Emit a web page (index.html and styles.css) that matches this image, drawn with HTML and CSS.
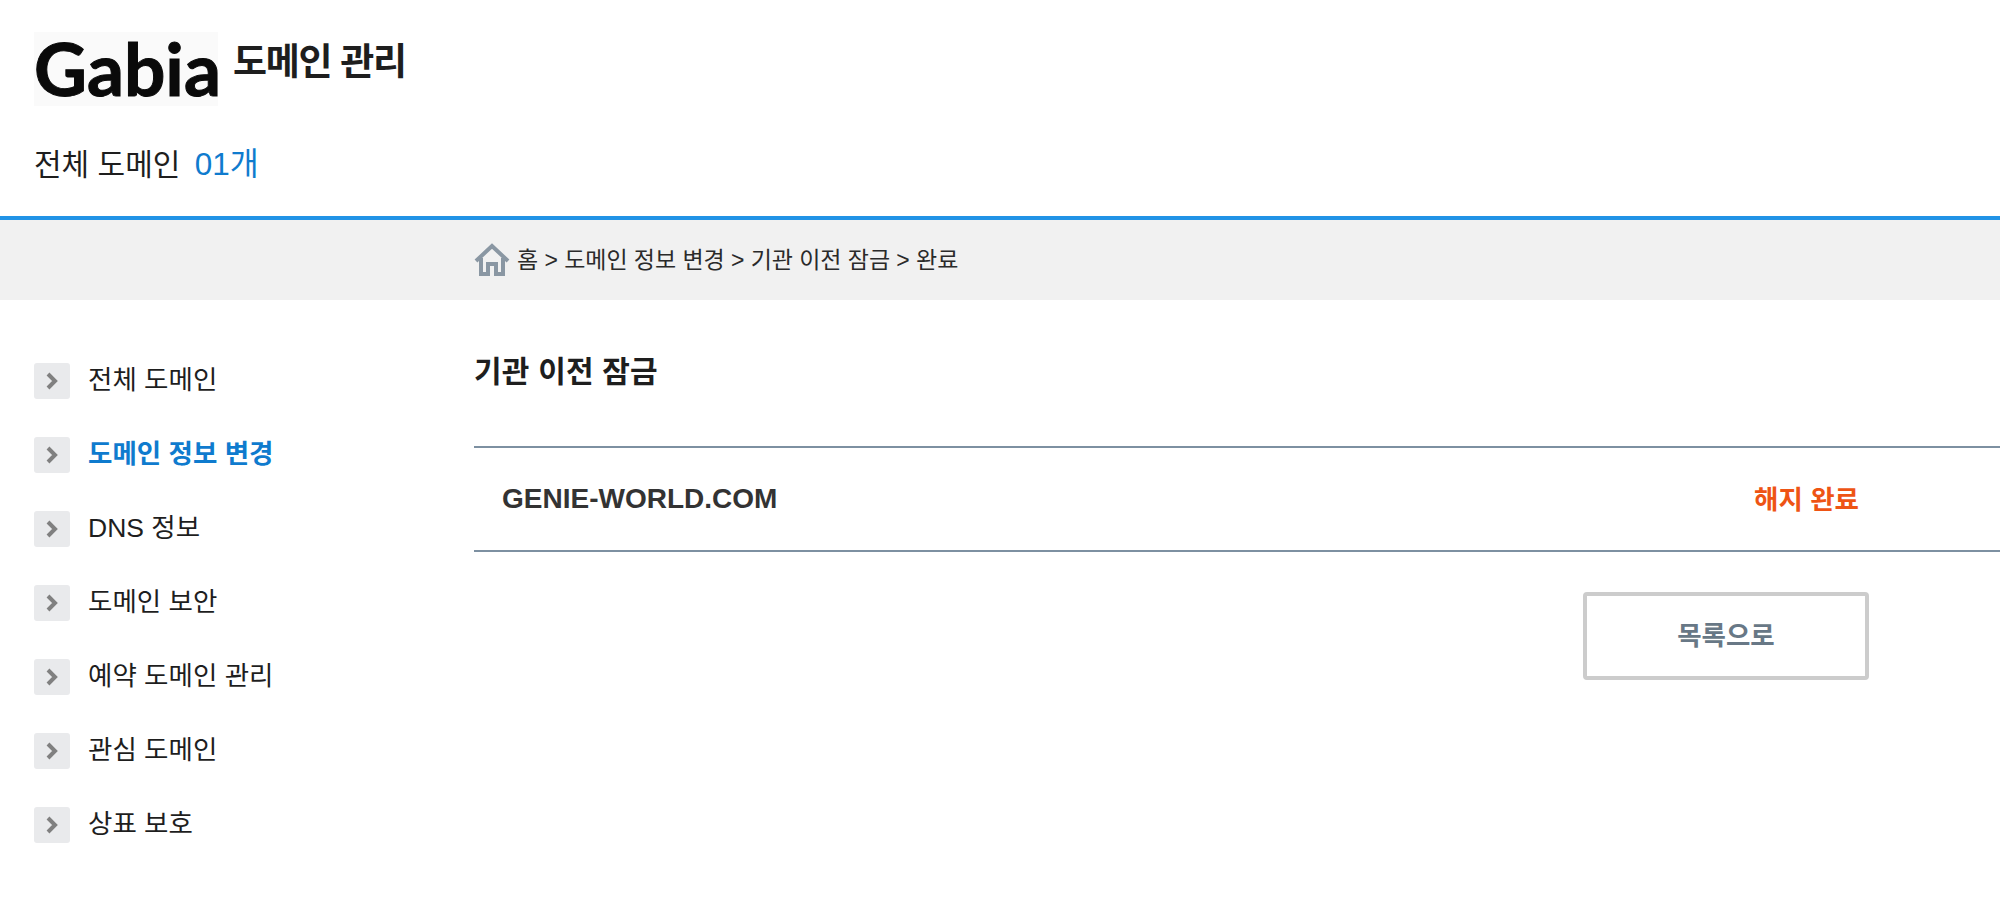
FILE: index.html
```html
<!DOCTYPE html>
<html lang="ko">
<head>
    <meta charset="UTF-8">
    <title>도메인 관리</title>
    <link rel="stylesheet" href="styles.css">
</head>
<body>
    <header class="top-header">
        <div class="brand">
            <div class="logo">Gabia</div>
            <h1>도메인 관리</h1>
        </div>
        <p class="domain-count">전체 도메인 <span class="count">01개</span></p>
    </header>

    <nav class="breadcrumb">
        <svg class="home-icon" viewBox="0 0 36 34" width="36" height="34">
            <path d="M2 18 L18 3 L34 18 M7 15 V31 H14 V21 H22 V31 H29 V15" fill="none" stroke="#8a97a3" stroke-width="4"/>
        </svg>
        <span class="crumbs">홈 &gt; 도메인 정보 변경 &gt; 기관 이전 잠금 &gt; 완료</span>
    </nav>

    <div class="page-body">
        <ul class="side-menu">
            <li><span class="arrow"><svg viewBox="0 0 14 18" width="14" height="18"><path d="M3 2 L10 9 L3 16" fill="none" stroke="#808080" stroke-width="4"/></svg></span>전체 도메인</li>
            <li class="active"><span class="arrow"><svg viewBox="0 0 14 18" width="14" height="18"><path d="M3 2 L10 9 L3 16" fill="none" stroke="#808080" stroke-width="4"/></svg></span>도메인 정보 변경</li>
            <li><span class="arrow"><svg viewBox="0 0 14 18" width="14" height="18"><path d="M3 2 L10 9 L3 16" fill="none" stroke="#808080" stroke-width="4"/></svg></span>DNS 정보</li>
            <li><span class="arrow"><svg viewBox="0 0 14 18" width="14" height="18"><path d="M3 2 L10 9 L3 16" fill="none" stroke="#808080" stroke-width="4"/></svg></span>도메인 보안</li>
            <li><span class="arrow"><svg viewBox="0 0 14 18" width="14" height="18"><path d="M3 2 L10 9 L3 16" fill="none" stroke="#808080" stroke-width="4"/></svg></span>예약 도메인 관리</li>
            <li><span class="arrow"><svg viewBox="0 0 14 18" width="14" height="18"><path d="M3 2 L10 9 L3 16" fill="none" stroke="#808080" stroke-width="4"/></svg></span>관심 도메인</li>
            <li><span class="arrow"><svg viewBox="0 0 14 18" width="14" height="18"><path d="M3 2 L10 9 L3 16" fill="none" stroke="#808080" stroke-width="4"/></svg></span>상표 보호</li>
        </ul>

        <main class="content">
            <h2>기관 이전 잠금</h2>
            <div class="domain-row">
                <span class="domain-name">GENIE-WORLD.COM</span>
                <span class="status">해지 완료</span>
            </div>
            <div class="actions">
                <button type="button" class="list-button">목록으로</button>
            </div>
        </main>
    </div>
</body>
</html>
```

FILE: styles.css
```css
body {
    margin: 0;
    background-color: #ffffff;
    color: #1e1e1e;
    font-family: "Liberation Sans", "Noto Sans CJK KR", sans-serif;
    overflow: hidden;
}

/* Header */
.top-header {
    height: 216px;
    padding: 32px 0 0 34px;
    box-sizing: border-box;
}

.brand {
    display: flex;
    align-items: flex-start;
    gap: 15px;
}

.logo {
    width: 184px;
    height: 74px;
    background-color: #fafafa;
    color: #0a0a0a;
    font-family: Lato, sans-serif;
    font-weight: 700;
    font-size: 73px;
    line-height: 72px;
    -webkit-text-stroke: 1px #0a0a0a;
    white-space: nowrap;
}

h1 {
    margin: 7px 0 0;
    font-size: 37px;
    line-height: 48px;
    font-weight: 700;
    letter-spacing: -1.3px;
}

.domain-count {
    margin: 37px 0 0;
    font-size: 30px;
    line-height: 42px;
}

.count {
    margin-left: 6px;
    font-size: 31.5px;
    color: #0f7bce;
}

/* Breadcrumb */
.breadcrumb {
    display: flex;
    align-items: center;
    gap: 7px;
    height: 80px;
    padding-left: 474px;
    background-color: #f1f1f1;
    border-top: 4px solid #2193e6;
    font-size: 23px;
    letter-spacing: -0.05px;
    color: #2a2a2a;
}

.crumbs {
    padding-bottom: 4px;
}

.page-body {
    display: flex;
}

/* Side menu */
.side-menu {
    width: 474px;
    flex-shrink: 0;
    box-sizing: border-box;
    margin: 0;
    padding: 63px 0 0 34px;
    list-style: none;
}

.side-menu li {
    display: flex;
    align-items: flex-start;
    gap: 18px;
    height: 36px;
    margin-bottom: 38px;
    font-size: 26.5px;
    line-height: 34px;
}

.side-menu li.active {
    color: #0f7bce;
    font-weight: 700;
}

.arrow {
    display: flex;
    align-items: center;
    justify-content: center;
    width: 36px;
    height: 36px;
    background-color: #e9eaec;
    border-radius: 3px;
}

/* Content */
.content {
    flex-grow: 1;
}

h2 {
    margin: 50px 0 0;
    font-size: 30px;
    line-height: 44px;
    font-weight: 700;
    letter-spacing: 0.2px;
}

.domain-row {
    display: flex;
    align-items: center;
    justify-content: space-between;
    box-sizing: border-box;
    height: 106px;
    margin-top: 52px;
    padding: 0 141px 0 28px;
    border-top: 2px solid #7d90a1;
    border-bottom: 2px solid #7d90a1;
}

.domain-name {
    font-size: 28px;
    font-weight: 700;
    color: #333333;
}

.status {
    padding-bottom: 4px;
    font-size: 26.5px;
    font-weight: 700;
    color: #ee5414;
}

.actions {
    display: flex;
    justify-content: flex-end;
    padding: 40px 131px 0 0;
}

.list-button {
    width: 286px;
    height: 88px;
    padding: 0 0 6px;
    background-color: #ffffff;
    border: 4px solid #cccccc;
    border-radius: 4px;
    color: #687886;
    font-family: inherit;
    font-size: 26.5px;
    font-weight: 700;
}
```
